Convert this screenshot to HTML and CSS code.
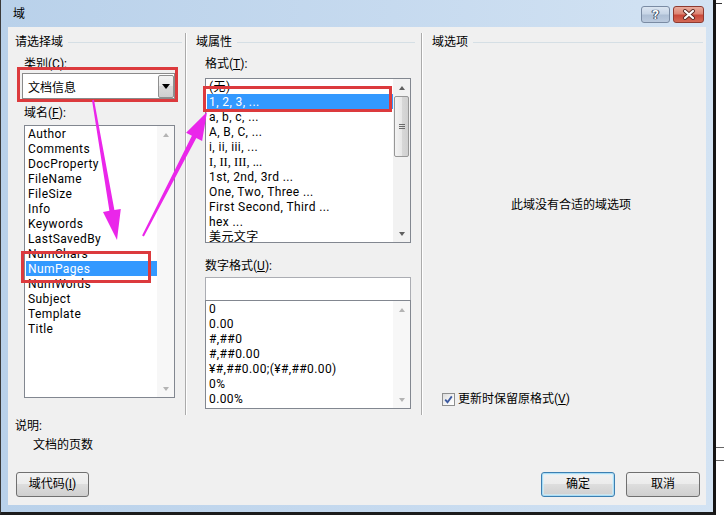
FILE: index.html
```html
<!DOCTYPE html>
<html lang="zh-CN">
<head>
<meta charset="utf-8">
<title>域</title>
<link rel="stylesheet" href="styles.css">
</head>
<body>
<div class="screen">
  <div class="window">
    <div class="titlebar">
      <span class="title">域</span>
      <div class="caption">
        <div class="cbtn help">?</div>
        <div class="cbtn close">
          <svg width="14" height="11" viewBox="0 0 14 11">
            <path d="M3 2 L11 9 M11 2 L3 9" stroke="#5a2a24" stroke-width="4" stroke-linecap="round"/>
            <path d="M3 2 L11 9 M11 2 L3 9" stroke="#fff" stroke-width="2.2" stroke-linecap="round"/>
          </svg>
        </div>
      </div>
    </div>
    <div class="client">
      <div class="columns">
        <section class="col col1">
          <div class="ghead"><span>请选择域</span><i class="rule"></i></div>
          <div class="lbl">类别(<u>C</u>):</div>
          <div class="combo">
            <span>文档信息</span>
            <div class="drop"><i class="tri-down"></i></div>
          </div>
          <div class="lbl">域名(<u>F</u>):</div>
          <div class="listbox fields">
            <ul class="items">
              <li>Author</li>
              <li>Comments</li>
              <li>DocProperty</li>
              <li>FileName</li>
              <li>FileSize</li>
              <li>Info</li>
              <li>Keywords</li>
              <li>LastSavedBy</li>
              <li>NumChars</li>
              <li class="sel">NumPages</li>
              <li>NumWords</li>
              <li>Subject</li>
              <li>Template</li>
              <li>Title</li>
            </ul>
            <div class="vscroll off">
              <span class="abox"><i class="tri-up"></i></span>
              <span class="abox"><i class="tri-dn"></i></span>
            </div>
          </div>
        </section>
        <div class="sep"></div>
        <section class="col col2">
          <div class="ghead"><span>域属性</span><i class="rule"></i></div>
          <div class="lbl">格式(<u>T</u>):</div>
          <div class="listbox formats">
            <ul class="items">
              <li>(无)</li>
              <li class="sel">1, 2, 3, ...</li>
              <li>a, b, c, ...</li>
              <li>A, B, C, ...</li>
              <li>i, ii, iii, ...</li>
              <li class="serif">I, II, III, ...</li>
              <li>1st, 2nd, 3rd ...</li>
              <li>One, Two, Three ...</li>
              <li>First Second, Third ...</li>
              <li>hex ...</li>
              <li>美元文字</li>
            </ul>
            <div class="vscroll">
              <span class="abox"><i class="tri-up"></i></span>
              <span class="thumb"><i class="grip"></i></span>
              <span class="fill"></span>
              <span class="abox"><i class="tri-dn"></i></span>
            </div>
          </div>
          <div class="lbl lbl-num">数字格式(<u>U</u>):</div>
          <div class="numinput"></div>
          <div class="listbox numbers">
            <ul class="items">
              <li>0</li>
              <li>0.00</li>
              <li>#,##0</li>
              <li>#,##0.00</li>
              <li>¥#,##0.00;(¥#,##0.00)</li>
              <li>0%</li>
              <li>0.00%</li>
            </ul>
            <div class="vscroll off">
              <span class="abox"><i class="tri-up"></i></span>
              <span class="abox"><i class="tri-dn"></i></span>
            </div>
          </div>
        </section>
        <div class="sep"></div>
        <section class="col col3">
          <div class="ghead"><span>域选项</span><i class="rule"></i></div>
          <div class="nomsg">此域没有合适的域选项</div>
          <div class="checkrow">
            <span class="chk">
              <svg width="9" height="9" viewBox="0 0 9 9"><path d="M1.2 4.6 L3.5 7.2 L7.8 1.4" fill="none" stroke="#3c5aa0" stroke-width="1.8"/></svg>
            </span>
            <span class="chklbl">更新时保留原格式(<u>V</u>)</span>
          </div>
        </section>
      </div>
      <div class="desc">
        <div class="desc-h">说明:</div>
        <div class="desc-t">文档的页数</div>
      </div>
      <div class="btns">
        <div class="btn">域代码(<u>I</u>)</div>
        <div class="btn default push">确定</div>
        <div class="btn">取消</div>
      </div>
    </div>
  </div>
  <div class="outside">
    <i class="o-mark"></i>
    <i class="o-l1"></i>
    <i class="o-l2"></i>
  </div>
  <svg class="annot" width="724" height="515" viewBox="0 0 724 515">
    <rect x="18.5" y="68.5" width="158" height="32" fill="none" stroke="#dc3a3d" stroke-width="3"/>
    <rect x="22.5" y="252.5" width="127" height="29" fill="none" stroke="#dc3a3d" stroke-width="3"/>
    <rect x="204.5" y="87.5" width="186" height="23" fill="none" stroke="#dc3a3d" stroke-width="3"/>
    <polygon points="92,100.2 94,99.8 114.4,210 120.8,208.9 117,240 103,211.9 109.4,210.8" fill="#ea26ea"/>
    <polygon points="142.1,235.5 191.9,135.8 186.1,132.8 207,112 202.1,141 196.3,138.1 143.9,236.5" fill="#ea26ea"/>
  </svg>
</div>
</body>
</html>
```

FILE: styles.css
```css
body {
  margin: 0;
  font-family: Roboto, "Noto Sans CJK SC", sans-serif;
  font-size: 12px;
  color: #000;
}

.screen {
  position: relative;
  width: 724px;
  height: 515px;
  display: flex;
  background: #fff;
  overflow: hidden;
}

.window {
  width: 716px;
  height: 515px;
  box-sizing: border-box;
  border-left: 1px solid #3a3a3a;
  border-right: 3px solid #151515;
  border-bottom: 3px solid #1c1c1c;
  background: linear-gradient(90deg, #b9d1ea 0%, #c6daef 55%, #d3e3f3 100%);
  display: flex;
  flex-direction: column;
}

.titlebar {
  height: 27px;
  display: flex;
  align-items: flex-start;
}

.title {
  margin: 6px 0 0 12px;
  line-height: 16px;
}

.caption {
  margin: 6px 9px 0 auto;
  display: flex;
  gap: 3px;
}

.cbtn {
  height: 17px;
  box-sizing: border-box;
  border-radius: 3px;
  display: flex;
  align-items: center;
  justify-content: center;
}

.help {
  width: 29px;
  border: 1px solid #7a8ba3;
  background: linear-gradient(#dbe5f1 0%, #c7d5e6 45%, #aebfd5 55%, #bccbdf 100%);
  color: #fff;
  font-weight: bold;
  font-size: 13px;
  line-height: 15px;
  text-shadow: 0 0 1px #34465f, 0 0 1px #34465f, 1px 0 0 #34465f, -1px 0 0 #34465f;
}

.close {
  width: 31px;
  border: 1px solid #8e3a30;
  background: linear-gradient(#e9ab9c 0%, #dd8675 45%, #c9483a 55%, #d46a56 100%);
}

.client {
  margin: 0 7px 7px;
  height: 478px;
  background: #f0f0f0;
  display: flex;
  flex-direction: column;
}

.columns {
  display: grid;
  grid-template-columns: 177px 1px 235px 1px 1fr;
  margin-top: 6px;
  height: 382px;
}

.sep {
  background: #ababab;
  box-shadow: 1px 0 0 #fff;
}

.col {
  display: flex;
  flex-direction: column;
  align-items: flex-start;
  padding-top: 1px;
}

.col1 { padding-left: 7px; padding-right: 3px; }
.col2 { padding-left: 10px; padding-right: 6px; }
.col3 { padding-left: 10px; padding-right: 3px; }

.ghead {
  align-self: stretch;
  display: flex;
  align-items: center;
  height: 16px;
  line-height: 16px;
}

.ghead .rule {
  flex: 1;
  height: 1px;
  margin-left: 5px;
  background: #d5dfe5;
}

.lbl {
  height: 16px;
  line-height: 16px;
  margin-top: 6px;
  margin-left: 9px;
}

.combo {
  margin-top: 1px;
  margin-left: 7px;
  width: 153px;
  height: 26px;
  box-sizing: border-box;
  border: 1px solid #8a8a8a;
  background: #fff;
  display: flex;
  align-items: center;
  padding-left: 5px;
}

.drop {
  margin-left: auto;
  margin-right: 0;
  width: 16px;
  height: 23px;
  box-sizing: border-box;
  border: 1px solid #8f8f8f;
  border-radius: 2px;
  background: linear-gradient(#f4f4f4 0%, #e9e9e9 50%, #dadada 50%, #cfcfcf 100%);
  display: flex;
  align-items: center;
  justify-content: center;
}

.tri-down {
  width: 0;
  height: 0;
  border-left: 4px solid transparent;
  border-right: 4px solid transparent;
  border-top: 5px solid #000;
}

.listbox {
  margin-left: 9px;
  box-sizing: border-box;
  border: 1px solid #828790;
  background: #fff;
  display: flex;
}

.fields {
  margin-top: 4px;
  width: 151px;
  height: 273px;
}

.formats {
  margin-top: 6px;
  width: 206px;
  height: 165px;
}

.numinput {
  margin-top: 3px;
  margin-left: 9px;
  width: 206px;
  height: 23px;
  box-sizing: border-box;
  border: 1px solid #abadb3;
  border-bottom: none;
  background: #fff;
}

.numbers {
  width: 206px;
  height: 109px;
}

.lbl-num { margin-top: 15px; }

.items {
  flex: 1;
  list-style: none;
  margin: 0;
  padding: 0;
  min-width: 0;
}

.items li {
  height: 15px;
  box-sizing: border-box;
  padding-top: 1px;
  line-height: 14px;
  margin-left: 1px;
  padding-left: 2px;
  letter-spacing: 0.4px;
  white-space: nowrap;
  overflow: hidden;
}

.items li.sel {
  background: #3399ff;
  color: #fff;
}

.items li.serif {
  font-family: "Liberation Serif", serif;
  font-size: 12.5px;
  letter-spacing: 0;
}

.vscroll {
  width: 17px;
  background: #f2f2f2;
  display: flex;
  flex-direction: column;
  justify-content: space-between;
}

.vscroll.off { background: #f7f7f7; }

.abox {
  width: 17px;
  height: 17px;
  display: flex;
  align-items: center;
  justify-content: center;
}

.tri-up, .tri-dn {
  width: 0;
  height: 0;
  border-left: 3.5px solid transparent;
  border-right: 3.5px solid transparent;
}

.tri-up { border-bottom: 4px solid #606060; }
.tri-dn { border-top: 4px solid #606060; }
.off .tri-up { border-bottom-color: #b4b4b4; }
.off .tri-dn { border-top-color: #b4b4b4; }

.thumb {
  width: 15px;
  height: 61px;
  margin-left: 1px;
  box-sizing: border-box;
  border: 1px solid #979797;
  border-radius: 2px;
  background: linear-gradient(90deg, #f3f3f3 0%, #e8e8e8 50%, #d8d8d8 51%, #d0d0d0 100%);
  display: flex;
  align-items: center;
  justify-content: center;
}

.grip {
  width: 6px;
  height: 5px;
  background: repeating-linear-gradient(#6a6a6a 0 1px, transparent 1px 2px);
}

.fill { flex: 1; }

.nomsg {
  margin-top: 147px;
  margin-left: 79px;
  line-height: 16px;
}

.checkrow {
  margin-top: 178px;
  margin-left: 10px;
  height: 16px;
  display: flex;
  align-items: center;
}

.chk {
  width: 13px;
  height: 13px;
  box-sizing: border-box;
  border: 1px solid #8e8f8f;
  background: linear-gradient(135deg, #dcdcdc 0%, #f6f6f6 60%, #fff 100%);
  display: flex;
  align-items: center;
  justify-content: center;
}

.chklbl {
  margin-left: 3px;
  line-height: 16px;
}

.desc {
  margin-top: 3px;
  padding-left: 7px;
  line-height: 16px;
}

.desc-t {
  margin-top: 3px;
  margin-left: 18px;
}

.btns {
  display: flex;
  gap: 11px;
  margin-top: 19px;
  padding: 0 6px 0 8px;
}

.btn {
  width: 74px;
  height: 25px;
  box-sizing: border-box;
  border: 1px solid #707070;
  border-radius: 3px;
  background: linear-gradient(#f2f2f2 0%, #ebebeb 50%, #dddddd 50%, #cfcfcf 100%);
  text-align: center;
  line-height: 23px;
}

.btn:first-child { width: 73px; }

.btn.push { margin-left: auto; }

.btn.default {
  border-color: #3c7fb1;
  box-shadow: inset 0 0 0 1px #a9dcf5, inset 0 0 0 2px rgba(210, 240, 252, 0.6);
}

.outside {
  flex: 1;
  display: flex;
  flex-direction: column;
}

.o-mark {
  margin-top: 3px;
  width: 6px;
  height: 1px;
  background: #333;
}

.o-l1 {
  margin-top: 443px;
  height: 1px;
  background: #666;
}

.o-l2 {
  margin-top: 12px;
  height: 1px;
  background: #666;
}

.annot {
  position: absolute;
  left: 0;
  top: 0;
  pointer-events: none;
}
```
